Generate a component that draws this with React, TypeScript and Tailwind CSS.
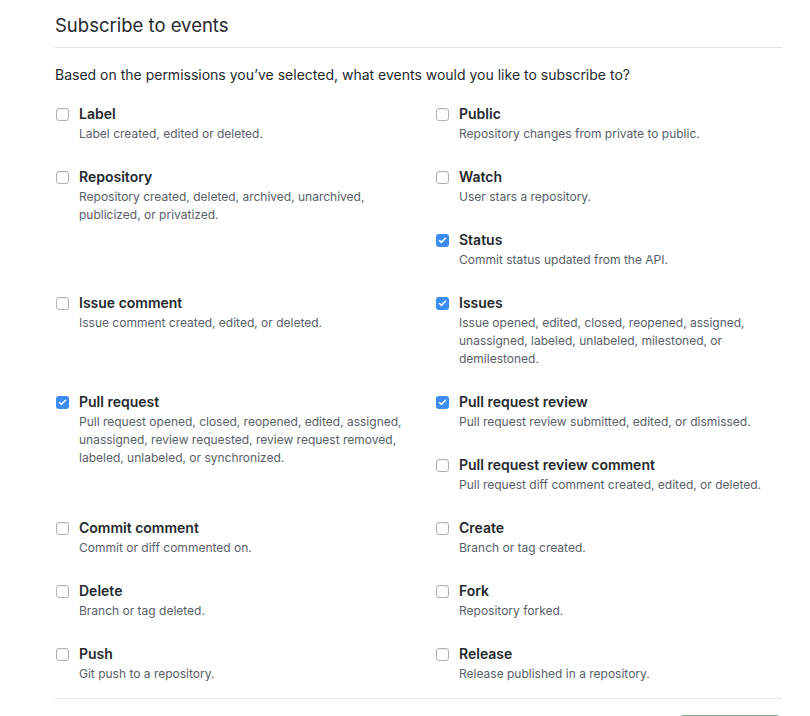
import { Check } from 'lucide-react';

type EventItem = {
  name: string;
  desc: string;
  checked?: boolean;
  col: 'left' | 'right';
  span?: boolean;
};

const events: EventItem[] = [
  { name: 'Label', desc: 'Label created, edited or deleted.', col: 'left' },
  { name: 'Public', desc: 'Repository changes from private to public.', col: 'right' },
  {
    name: 'Repository',
    desc: 'Repository created, deleted, archived, unarchived, publicized, or privatized.',
    col: 'left',
    span: true,
  },
  { name: 'Watch', desc: 'User stars a repository.', col: 'right' },
  { name: 'Status', desc: 'Commit status updated from the API.', checked: true, col: 'right' },
  { name: 'Issue comment', desc: 'Issue comment created, edited, or deleted.', col: 'left' },
  {
    name: 'Issues',
    desc: 'Issue opened, edited, closed, reopened, assigned, unassigned, labeled, unlabeled, milestoned, or demilestoned.',
    checked: true,
    col: 'right',
  },
  {
    name: 'Pull request',
    desc: 'Pull request opened, closed, reopened, edited, assigned, unassigned, review requested, review request removed, labeled, unlabeled, or synchronized.',
    checked: true,
    col: 'left',
    span: true,
  },
  { name: 'Pull request review', desc: 'Pull request review submitted, edited, or dismissed.', checked: true, col: 'right' },
  { name: 'Pull request review comment', desc: 'Pull request diff comment created, edited, or deleted.', col: 'right' },
  { name: 'Commit comment', desc: 'Commit or diff commented on.', col: 'left' },
  { name: 'Create', desc: 'Branch or tag created.', col: 'right' },
  { name: 'Delete', desc: 'Branch or tag deleted.', col: 'left' },
  { name: 'Fork', desc: 'Repository forked.', col: 'right' },
  { name: 'Push', desc: 'Git push to a repository.', col: 'left' },
  { name: 'Release', desc: 'Release published in a repository.', col: 'right' },
];

function Checkbox({ checked }: { checked?: boolean }) {
  if (checked) {
    return (
      <span className="mt-[3px] flex h-[13px] w-[13px] shrink-0 items-center justify-center rounded-[3px] bg-[#3b8df5]">
        <Check className="h-[9px] w-[9px] text-white" strokeWidth={4} />
      </span>
    );
  }
  return (
    <span className="mt-[3px] h-[13px] w-[13px] shrink-0 rounded-[3px] border border-[#b0b0b0] bg-white shadow-[inset_0_1px_1px_rgba(0,0,0,0.06)]" />
  );
}

function EventOption({ item }: { item: EventItem }) {
  return (
    <label
      className={`flex gap-[10px] pl-px ${item.col === 'left' ? 'col-start-1' : 'col-start-2'} ${
        item.span ? 'row-span-2' : ''
      }`}
    >
      <Checkbox checked={item.checked} />
      <div className={item.col === 'left' ? 'w-[330px]' : 'w-[323px]'}>
        <div className="text-[14px] font-semibold leading-[18px] text-[#24292e]">{item.name}</div>
        <div className="mt-[2px] text-[12px] leading-[18px] text-[#586069]">{item.desc}</div>
      </div>
    </label>
  );
}

export default function App() {
  return (
    <div className="min-h-[716px] bg-white font-['Inter',sans-serif] text-[#24292e]">
      <div className="ml-[55px] w-[727px]">
        <h2 className="border-b border-[#e1e4e8] pt-[10px] pb-[7px] text-[18.5px] leading-[30px] font-normal">
          Subscribe to events
        </h2>
        <p className="mt-4 text-[14px] leading-[21px]">
          Based on the permissions you’ve selected, what events would you like to subscribe to?
        </p>
        <div className="mt-[20px] grid grid-cols-[380px_1fr] gap-y-[25px] grid-flow-dense">
          {events.map((item) => (
            <EventOption key={item.name} item={item} />
          ))}
        </div>
        <div className="mt-[15px] border-t border-[#e1e4e8] pt-4">
          <div className="flex justify-end">
            <button className="w-[104px] rounded-md border border-[#84a88f] bg-[#2ea44f] px-4 py-[6px] text-[14px] font-semibold text-white">
              Save
            </button>
          </div>
        </div>
      </div>
    </div>
  );
}
